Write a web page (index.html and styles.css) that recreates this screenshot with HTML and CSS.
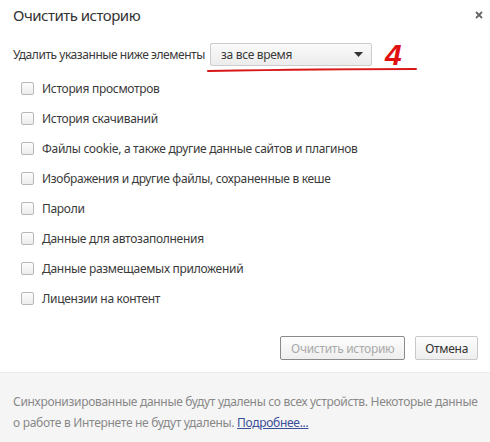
FILE: index.html
```html
<!DOCTYPE html>
<html lang="ru">
<head>
  <meta charset="UTF-8">
  <title>Очистить историю</title>
  <link rel="stylesheet" href="styles.css">
</head>
<body>

<div class="dialog">
  <div class="dialog-head">
    <h1>Очистить историю</h1>
    <button class="close-btn" title="Закрыть">
      <svg width="8" height="8" viewBox="0 0 8 8"><path d="M1 1L7 7M7 1L1 7" stroke="#666" stroke-width="1.8"/></svg>
    </button>
  </div>

  <div class="range-row">
    <span class="range-label">Удалить указанные ниже элементы</span>
    <div class="select">
      <span>за все время</span>
      <svg class="select-arrow" width="9" height="5" viewBox="0 0 9 5"><path d="M0 0H9L4.5 5Z" fill="#333"/></svg>
    </div>
    <span class="mark">4</span>
    <svg class="mark-line" width="212" height="6" viewBox="0 0 212 6"><path d="M2 4C60 3 120 2 210 2" stroke="#d81818" stroke-width="2" fill="none" stroke-linecap="round"/></svg>
  </div>

  <ul class="options">
    <li><label><span class="box"></span>История просмотров</label></li>
    <li><label><span class="box"></span>История скачиваний</label></li>
    <li><label><span class="box"></span>Файлы cookie, а также другие данные сайтов и плагинов</label></li>
    <li><label><span class="box"></span>Изображения и другие файлы, сохраненные в кеше</label></li>
    <li><label><span class="box"></span>Пароли</label></li>
    <li><label><span class="box"></span>Данные для автозаполнения</label></li>
    <li><label><span class="box"></span>Данные размещаемых приложений</label></li>
    <li><label><span class="box"></span>Лицензии на контент</label></li>
  </ul>

  <div class="actions">
    <button class="btn btn-disabled">Очистить историю</button>
    <button class="btn">Отмена</button>
  </div>

  <div class="dialog-foot">
    <p>Синхронизированные данные будут удалены со всех устройств. Некоторые данные</p>
    <p>о работе в Интернете не будут удалены. <a href="#">Подробнее...</a></p>
  </div>
</div>

</body>
</html>
```

FILE: styles.css
```css
body {
  margin: 0;
  background: #fff;
  font-family: 'Noto Sans', 'Open Sans', sans-serif;
  font-size: 12px;
  letter-spacing: -0.3px;
  color: #3a3a3a;
}

.dialog {
  width: 490px;
  height: 442px;
  display: flex;
  flex-direction: column;
}

.dialog-head {
  display: flex;
  justify-content: space-between;
  align-items: flex-start;
  padding: 5px 4px 0 13px;
  height: 36px;
  box-sizing: border-box;
}

h1 {
  margin: 0;
  font-size: 15px;
  font-weight: normal;
  letter-spacing: -0.5px;
  color: #333;
}

.close-btn {
  border: none;
  background: none;
  padding: 2px 3px;
  cursor: pointer;
}

.range-row {
  position: relative;
  display: flex;
  align-items: center;
  padding: 0 0 0 13px;
  height: 37px;
}

.range-label {
  width: 197px;
  white-space: nowrap;
  letter-spacing: -0.45px;
}

.select {
  width: 162px;
  height: 23px;
  box-sizing: border-box;
  border: 1px solid #ccc;
  border-radius: 2px;
  background: linear-gradient(#fafafa, #ececec);
  display: flex;
  align-items: center;
  justify-content: space-between;
  padding: 0 8px 0 10px;
}

.mark {
  margin-left: 13px;
  font-family: 'Liberation Sans', sans-serif;
  font-size: 30px;
  font-weight: bold;
  font-style: italic;
  letter-spacing: 0;
  color: #e01010;
  line-height: 1;
}

.mark-line {
  position: absolute;
  left: 206px;
  top: 31px;
}

.options {
  list-style: none;
  margin: 0;
  padding: 0 0 0 21px;
}

.options li {
  height: 30px;
  display: flex;
  align-items: center;
}

.options label {
  display: flex;
  align-items: center;
}

.box {
  width: 11px;
  height: 11px;
  border: 1px solid #b8b8b8;
  border-radius: 2px;
  background: linear-gradient(#fcfcfc, #ececec);
  margin-right: 8px;
}

.actions {
  display: flex;
  justify-content: flex-end;
  gap: 10px;
  padding: 23px 12px 0 0;
  height: 36px;
}

.btn {
  height: 24px;
  padding: 0 9px;
  border: 1px solid #c8c8c8;
  border-radius: 2px;
  background: linear-gradient(#fdfdfd, #eeeeee);
  font-family: inherit;
  font-size: 12px;
  letter-spacing: -0.3px;
  white-space: nowrap;
  color: #333;
  cursor: pointer;
}

.btn-disabled {
  border-color: #8a8a8a;
  color: #aaa;
  width: 125px;
}

.dialog-foot {
  flex: 1;
  background: #f5f5f5;
  border-top: 1px solid #ececec;
  padding: 18px 0 0 13px;
  font-size: 12px;
  letter-spacing: -0.3px;
  color: #888;
}

.dialog-foot p {
  margin: 0;
  height: 21px;
  line-height: 21px;
  white-space: nowrap;
}

.dialog-foot a {
  color: #3a4f9a;
}
```
